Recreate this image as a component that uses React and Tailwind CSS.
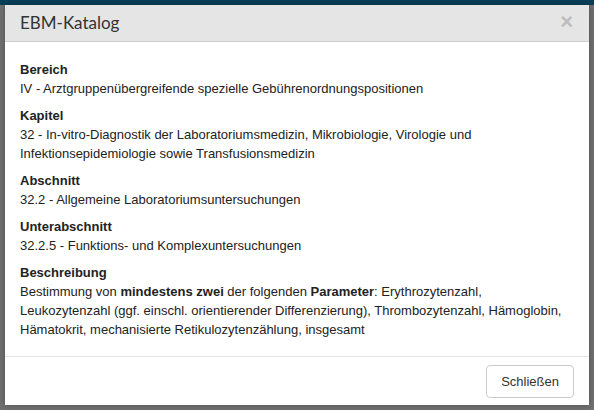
import React from "react";

const sections = [
  { title: "Bereich", body: "IV - Arztgruppenübergreifende spezielle Gebührenordnungspositionen" },
  {
    title: "Kapitel",
    body: "32 - In-vitro-Diagnostik der Laboratoriumsmedizin, Mikrobiologie, Virologie und Infektionsepidemiologie sowie Transfusionsmedizin",
  },
  { title: "Abschnitt", body: "32.2 - Allgemeine Laboratoriumsuntersuchungen" },
  { title: "Unterabschnitt", body: "32.2.5 - Funktions- und Komplexuntersuchungen" },
];

export default function App() {
  return (
    <div className="h-[410px] w-[594px] overflow-hidden bg-[#707070] flex flex-col">
      <div className="h-[5px] bg-[#0a3f59] shrink-0" />
      <div className="flex-1 px-[5px] flex flex-col">
        {/* modal */}
        <div className="h-[400px] bg-white flex flex-col shadow-[0_0_6px_rgba(0,0,0,0.3)]">
          <div className="h-[37px] bg-[#e5e5e5] border-b border-[#cfcfcf] flex items-center justify-between pl-[15px] pr-[16px] shrink-0">
            <h4 className="text-[17px] text-[#333] leading-none font-['Lato',sans-serif] pb-[1px]">EBM-Katalog</h4>
            <span className="text-[22px] font-bold leading-none text-[#bdbdbd] font-['Liberation_Sans',sans-serif] pb-[2px]">×</span>
          </div>

          <div className="pt-[18px] pb-[17px] px-[15px] text-[13px] leading-[19px] text-[#222] font-['Liberation_Sans',Arial,sans-serif] flex flex-col gap-[8px]">
            {sections.map((s) => (
              <div key={s.title}>
                <div className="font-bold">{s.title}</div>
                <div>{s.body}</div>
              </div>
            ))}
            <div>
              <div className="font-bold">Beschreibung</div>
              <p>
                Bestimmung von <b>mindestens zwei</b> der folgenden <b>Parameter</b>: Erythrozytenzahl,
                Leukozytenzahl (ggf. einschl. orientierender Differenzierung), Thrombozytenzahl, Hämoglobin,
                Hämatokrit, mechanisierte Retikulozytenzählung, insgesamt
              </p>
            </div>
          </div>

          <div className="border-t border-[#e5e5e5] flex-1 flex items-start justify-end pt-[8px] pr-[15px]">
            <button className="h-[33px] px-[14px] border border-[#cccccc] rounded-[4px] bg-white text-[13px] text-[#333] font-['Liberation_Sans',Arial,sans-serif]">
              Schließen
            </button>
          </div>
        </div>
      </div>
    </div>
  );
}
